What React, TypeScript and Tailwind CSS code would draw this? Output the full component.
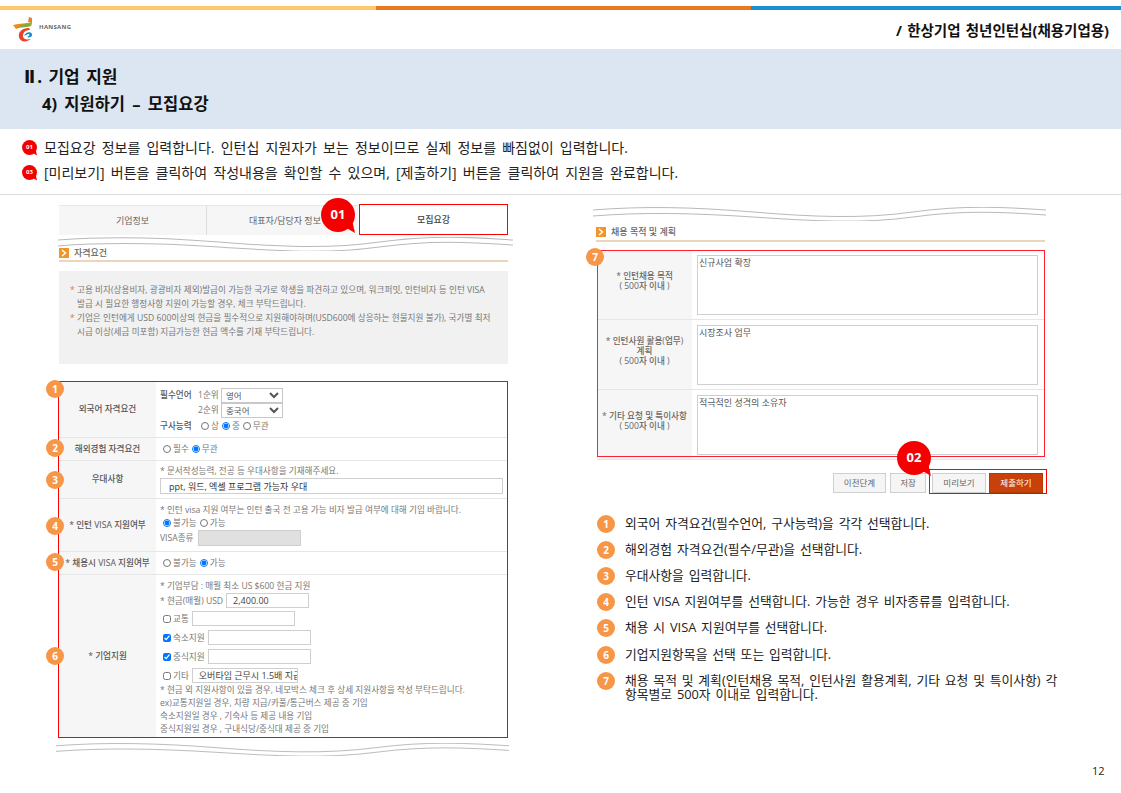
import type { ReactNode } from 'react'

const guideItems = [
  { n: 1, top: 'mt-[22px]', text: '외국어 자격요건(필수언어, 구사능력)을 각각 선택합니다.' },
  { n: 2, top: 'mt-[8px]', text: '해외경험 자격요건(필수/무관)을 선택합니다.' },
  { n: 3, top: 'mt-[8px]', text: '우대사항을 입력합니다.' },
  { n: 4, top: 'mt-[8px]', text: '인턴 VISA 지원여부를 선택합니다. 가능한 경우 비자종류를 입력합니다.' },
  { n: 5, top: 'mt-[8px]', text: '채용 시 VISA 지원여부를 선택합니다.' },
  { n: 6, top: 'mt-[9px]', text: '기업지원항목을 선택 또는 입력합니다.' },
  { n: 7, top: 'mt-[8px]', text: '채용 목적 및 계획(인턴채용 목적, 인턴사원 활용계획, 기타 요청 및 특이사항) 각\n항목별로 500자 이내로 입력합니다.' },
]

function Logo() {
  return (
    <svg width="24" height="28" viewBox="0 0 24 28" className="shrink-0">
      <path d="M1 9 C8 7 14 8 20 6 L19 10 C13 12 7 11 4 13 Z" fill="#f08a1d" />
      <path d="M8 9 C12 8 15 8 20 6 L19 10 C15 11 11 11 8 11 Z" fill="#7fae3a" />
      <path d="M17 1 L20 2 L20 6 L16 6 Z" fill="#ef7d22" />
      <path d="M17 12 C10 12 6 16 7 21 C8 26 14 27 19 23 C14 24 11 23 11 20 C11 16 14 14 18 14 Z" fill="#e8412a" />
      <path d="M12 20 C13 16 19 15 20 18 C21 21 17 22 15 21 C17 20 18 19 17 18 C15 18 14 19 12 20 Z" fill="#1c8fd0" />
    </svg>
  )
}

function Wave({ className }: { className: string }) {
  return (
    <svg viewBox="0 0 453 14" preserveAspectRatio="none" className={className}>
      <path d="M0 5 C50 0 100 0 160 5 S270 10 320 4 S410 1 453 6" fill="#fff" stroke="none" />
      <path d="M0 3 C50 -1 100 0 160 5 S270 12 320 5 S410 0 453 3" fill="none" stroke="#b9b9b9" strokeWidth="1" />
      <path d="M0 9 C50 5 100 6 160 10 S270 17 320 10 S410 5 453 8" fill="none" stroke="#b9b9b9" strokeWidth="1" />
    </svg>
  )
}

function Bubble({ label, size, className, textClass }: { label: string; size: number; className: string; textClass: string }) {
  return (
    <div className={`${className} flex items-center justify-center`} style={{ width: size, height: size }}>
      <svg viewBox="0 0 36 36" className="absolute inset-0 h-full w-full overflow-visible">
        <circle cx="18" cy="18" r="18" fill="#f40000" />
        <polygon points="24,30 36,37 33,24" fill="#f40000" />
      </svg>
      <span className={`relative font-bold text-white ${textClass}`}>{label}</span>
    </div>
  )
}

function NumDot({ n, className }: { n: number; className: string }) {
  return (
    <div className={`${className} flex h-[18px] w-[18px] items-center justify-center rounded-full bg-[#f79646] text-[10px] font-bold text-white`}>
      {n}
    </div>
  )
}

function Radio({ label, checked }: { label: string; checked?: boolean }) {
  return (
    <label className="mr-[3px] flex items-center gap-[2px]">
      <input type="radio" defaultChecked={checked} className="h-[8px] w-[8px] m-0" />
      {label}
    </label>
  )
}

function Check({ label, checked }: { label: string; checked?: boolean }) {
  return (
    <label className="flex items-center gap-[2px]">
      <input type="checkbox" defaultChecked={checked} className="m-0 h-[8px] w-[8px]" />
      {label}
    </label>
  )
}

function Row({ label, height, children, last }: { label: ReactNode; height: string; children: ReactNode; last?: boolean }) {
  return (
    <div className={`grid grid-cols-[97px_1fr] ${height} ${last ? '' : 'border-b border-[#e6e6e6]'}`}>
      <div className="flex items-center justify-center bg-[#f6f6f6] text-center text-[8.6px] font-medium text-[#555]">{label}</div>
      <div className="pl-[4px] text-[8.6px] text-[#777]">{children}</div>
    </div>
  )
}

function SectionTitle({ title, className }: { title: string; className: string }) {
  return (
    <div className={`${className} flex items-center gap-[5px] border-b-2 border-[#ead5bd] text-[9px] font-medium text-[#666]`}>
      <span className="flex h-[10px] w-[10px] items-center justify-center bg-[#f0962b]">
        <svg width="6" height="8" viewBox="0 0 6 8"><path d="M1 1 L4.5 4 L1 7" fill="none" stroke="#fff" strokeWidth="1.4" /></svg>
      </span>
      {title}
    </div>
  )
}

function Select({ value }: { value: string }) {
  return (
    <select defaultValue={value} className="h-[15px] w-[62px] border border-[#c8c8c8] bg-white text-[8.5px] text-[#555]">
      <option>{value}</option>
    </select>
  )
}

function WishRow({ label, value }: { label: ReactNode; value: string }) {
  return (
    <div className="grid h-[70px] grid-cols-[95px_1fr] border-b border-[#e6e6e6]">
      <div className="flex items-center justify-center bg-[#f6f6f6] pb-[8px] text-center text-[8.6px] font-medium leading-[10px] text-[#666]">{label}</div>
      <div className="px-[5px] pt-[5px]">
        <textarea readOnly defaultValue={value} className="block h-[60px] w-[341px] resize-none border border-[#cfcfcf] bg-white p-0 pl-[1px] text-[9px] text-[#555]" />
      </div>
    </div>
  )
}

export default function App() {
  return (
    <div className="flex h-[793px] w-[1121px] flex-col overflow-hidden bg-white font-['Open_Sans','Noto_Sans_CJK_KR',sans-serif] text-[#111]">
      <div className="mt-[6px] flex h-[4px] shrink-0">
        <div className="w-[376px] bg-[#fdc96b]" />
        <div className="w-[375px] bg-[#e8791c]" />
        <div className="flex-1 bg-[#1a8fd1]" />
      </div>

      <header className="flex h-[39px] shrink-0 items-center justify-between pl-[12px] pr-[12px]">
        <div className="flex items-center gap-[3px]">
          <Logo />
          <span className="mb-[4px] text-[6px] font-bold tracking-[0.3px] text-[#666]">HANSANG</span>
        </div>
        <div className="mt-[3px] text-[14.5px] font-bold text-[#111] [word-spacing:1.5px]">/ 한상기업 청년인턴십(채용기업용)</div>
      </header>

      <section className="h-[80px] shrink-0 bg-[#dce6f2] pl-[24px] pt-[15px] font-bold">
        <div className="text-[17px] leading-[25px] [word-spacing:2px]"><span className="mr-[2px] font-['DejaVu_Sans',sans-serif]">Ⅱ</span>. 기업 지원</div>
        <div className="pl-[18px] text-[16.5px] leading-[28px] [word-spacing:3px]">4) 지원하기 – 모집요강</div>
      </section>

      <section className="h-[66px] shrink-0 border-b border-[#dcdcdc] pl-[22px] pt-[6px] text-[14px] text-[#222] [word-spacing:2.5px]">
        <div className="flex h-[25px] items-center gap-[7px]">
          <Bubble label="01" size={15} className="relative shrink-0" textClass="text-[6px]" />
          모집요강 정보를 입력합니다. 인턴십 지원자가 보는 정보이므로 실제 정보를 빠짐없이 입력합니다.
        </div>
        <div className="flex h-[25px] items-center gap-[7px]">
          <Bubble label="03" size={15} className="relative shrink-0" textClass="text-[6px]" />
          [미리보기] 버튼을 클릭하여 작성내용을 확인할 수 있으며, [제출하기] 버튼을 클릭하여 지원을 완료합니다.
        </div>
      </section>

      <main className="flex flex-1">
        {/* left capture */}
        <div className="relative ml-[59px] w-[449px] pt-[10px]">
          <div className="grid h-[30px] grid-cols-[148px_151px_150px] border-t border-[#e8e8e8] text-[9px] text-[#666]">
            <div className="flex items-center justify-center border-r border-[#ddd] bg-[#f6f6f6]">기업정보</div>
            <div className="flex items-center justify-center bg-[#f6f6f6] pl-[5px]">대표자/담당자 정보</div>
            <div className="-mt-[2px] ml-[1px] flex h-[31px] items-center justify-center border border-[#f00] bg-white font-medium text-[#444]">모집요강</div>
          </div>
          <Bubble label="01" size={34} className="absolute left-[262px] top-[3px]" textClass="text-[13px]" />
          <Wave className="relative z-10 -ml-[1px] mt-[2px] h-[14px] w-[455px] max-w-none" />
          <SectionTitle title="자격요건" className="-mt-[6px] h-[17px]" />

          <div className="mt-[9px] h-[93px] bg-[#f1f1f1] pl-[11px] pt-[12px] text-[8.65px] leading-[14px] text-[#777]">
            <div className="pl-[7px] -indent-[7px]"><span className="text-[#e8791c]">* </span>고용 비자(상용비자, 광광비자 제외)발급이 가능한 국가로 학생을 파견하고 있으며, 워크퍼밋, 인턴비자 등 인턴 VISA<br />발급 시 필요한 행정사항 지원이 가능할 경우, 체크 부탁드립니다.</div>
            <div className="pl-[7px] -indent-[7px]"><span className="text-[#e8791c]">* </span>기업은 인턴에게 USD 600이상의 현금을 필수적으로 지원해야하며(USD600에 상응하는 현물지원 불가), 국가별 최저<br />시급 이상(세금 미포함) 지급가능한 현금 액수를 기재 부탁드립니다.</div>
          </div>

          <div className="relative -ml-[1px] mt-[17px] h-[357px] w-[450px] border border-[#f00]">
            <Row label="외국어 자격요건" height="h-[56px]">
              <div className="pt-[6px]">
                <div className="flex h-[15px] items-center"><span className="w-[38px] font-medium text-[#555]">필수언어</span><span className="w-[23px]">1순위</span><Select value="영어" /></div>
                <div className="flex h-[15px] items-center"><span className="w-[38px]" /><span className="w-[23px]">2순위</span><Select value="중국어" /></div>
                <div className="mt-[1px] flex h-[15px] items-center"><span className="w-[41px] font-medium text-[#555]">구사능력</span><Radio label="상" /><Radio label="중" checked /><Radio label="무관" /></div>
              </div>
            </Row>
            <Row label="해외경험 자격요건" height="h-[23px]">
              <div className="flex h-full items-center pl-[3px]"><Radio label="필수" /><Radio label="무관" checked /></div>
            </Row>
            <Row label="우대사항" height="h-[38px]">
              <div className="pt-[4px] leading-[12px]">* 문서작성능력, 전공 등 우대사항을 기재해주세요.</div>
              <input readOnly value="ppt, 워드, 엑셀 프로그램 가능자 우대" className="mt-[1px] block h-[16px] w-[343px] border border-[#cfcfcf] pl-[8px] text-[9px] text-[#333]" />
            </Row>
            <Row label="* 인턴 VISA 지원여부" height="h-[53px]">
              <div className="pt-[5px] leading-[12px]">* 인턴 visa 지원 여부는 인턴 출국 전 고용 가능 비자 발급 여부에 대해 기입 바랍니다.</div>
              <div className="flex h-[14px] items-center pl-[3px]"><Radio label="불가능" checked /><Radio label="가능" /></div>
              <div className="flex items-center gap-[1px]"><span className="w-[37px]">VISA종류</span><input readOnly className="h-[16px] w-[103px] border border-[#cfcfcf] bg-[#e0e0e0]" /></div>
            </Row>
            <Row label="* 채용시 VISA 지원여부" height="h-[23px]">
              <div className="flex h-full items-center pl-[3px]"><Radio label="불가능" /><Radio label="가능" checked /></div>
            </Row>
            <Row label="* 기업지원" height="h-[162px]" last>
              <div className="pt-[5px] leading-[12px]">
                <div>* 기업부담 : 매월 최소 US $600 현금 지원</div>
                <div className="mt-[1px] flex items-center gap-[3px]">* 현금(매월) USD<input readOnly value="2,400.00" className="h-[15px] w-[83px] border border-[#cfcfcf] pl-[6px] text-[9px] text-[#444]" /></div>
                <div className="mt-[3px] flex items-center gap-[3px] pl-[3px]"><Check label="교통" /><input readOnly className="h-[15px] w-[103px] border border-[#cfcfcf]" /></div>
                <div className="mt-[4px] flex items-center gap-[3px] pl-[3px]"><Check label="숙소지원" checked /><input readOnly className="h-[15px] w-[103px] border border-[#cfcfcf]" /></div>
                <div className="mt-[4px] flex items-center gap-[3px] pl-[3px]"><Check label="중식지원" checked /><input readOnly className="h-[15px] w-[103px] border border-[#cfcfcf]" /></div>
                <div className="mt-[4px] flex items-center gap-[3px] pl-[3px]"><Check label="기타" /><input readOnly value="오버타임 근무시 1.5배 지급" className="h-[15px] w-[106px] border border-[#cfcfcf] pl-[6px] text-[9px] text-[#444]" /></div>
                <div className="mt-[1px] leading-[13px]">
                  <div>* 현금 외 지원사항이 있을 경우, 네모박스 체크 후 상세 지원사항을 작성 부탁드립니다.</div>
                  <div>ex)교통지원일 경우, 차량 지급/카풀/통근버스 제공 중 기입</div>
                  <div>숙소지원일 경우 , 기숙사 등 제공 내용 기입</div>
                  <div>중식지원일 경우 , 구내식당/중식대 제공 중 기입</div>
                </div>
              </div>
            </Row>
            <NumDot n={1} className="absolute -left-[13px] -top-[2px]" />
            <NumDot n={2} className="absolute -left-[13px] top-[57px]" />
            <NumDot n={3} className="absolute -left-[13px] top-[89px]" />
            <NumDot n={4} className="absolute -left-[13px] top-[135px]" />
            <NumDot n={5} className="absolute -left-[13px] top-[171px]" />
            <NumDot n={6} className="absolute -left-[13px] top-[265px]" />
          </div>
          <Wave className="-ml-[3px] mt-[5px] h-[13px] w-[453px] max-w-none" />
        </div>

        {/* right capture */}
        <div className="ml-[88px] w-[449px]">
          <Wave className="-ml-[3px] mt-[12px] h-[14px] w-[453px] max-w-none" />
          <SectionTitle title="채용 목적 및 계획" className="mt-[3px] h-[18px] pb-[1px]" />
          <div className="relative ml-[1px] mt-[8px] w-[448px]">
            <WishRow label={<span>* 인턴채용 목적<br />( 500자 이내 )</span>} value="신규사업 확장" />
            <WishRow label={<span>* 인턴사원 활용(업무)<br />계획<br />( 500자 이내 )</span>} value="시장조사 업무" />
            <WishRow label={<span>* 기타 요청 및 특이사항<br />( 500자 이내 )</span>} value="적극적인 성격의 소유자" />
            <div className="absolute left-0 top-0 h-[207px] w-[448px] border border-[#f23]" />
            <NumDot n={7} className="absolute -left-[11px] -top-[2px]" />
          </div>
          <div className="relative mt-[13px] flex h-[20px] justify-end gap-[4px] pr-[2px] text-[8.5px] text-[#666]">
            <button className="h-[20px] w-[53px] border border-[#cfcfcf] bg-[#f5f5f5]">이전단계</button>
            <button className="mr-[2px] h-[20px] w-[36px] border border-[#cfcfcf] bg-[#f5f5f5]">저장</button>
            <button className="h-[20px] w-[54px] border border-[#cfcfcf] bg-[#f5f5f5]">미리보기</button>
            <button className="-ml-[1px] h-[20px] w-[54px] border border-[#b33a00] bg-[#c8410b] text-white">제출하기</button>
            <div className="absolute right-[-2px] top-[-4px] h-[25px] w-[118px] border border-[#f00]" />
            <Bubble label="02" size={34} className="absolute left-[301px] top-[-32px]" textClass="text-[13px]" />
          </div>

          <ul className="ml-[1px] text-[12.8px] leading-[14px] text-[#222] [word-spacing:1.5px]">
            {guideItems.map((item) => (
              <li key={item.n} className={`${item.top} flex gap-[10px]`}>
                <NumDot n={item.n} className="shrink-0" />
                <span className="w-[440px] shrink-0 whitespace-pre-line pt-[1px]">{item.text}</span>
              </li>
            ))}
          </ul>
        </div>
      </main>

      <div className="absolute left-[1092px] top-[763px] text-[11px] text-[#222]">12</div>
    </div>
  )
}
